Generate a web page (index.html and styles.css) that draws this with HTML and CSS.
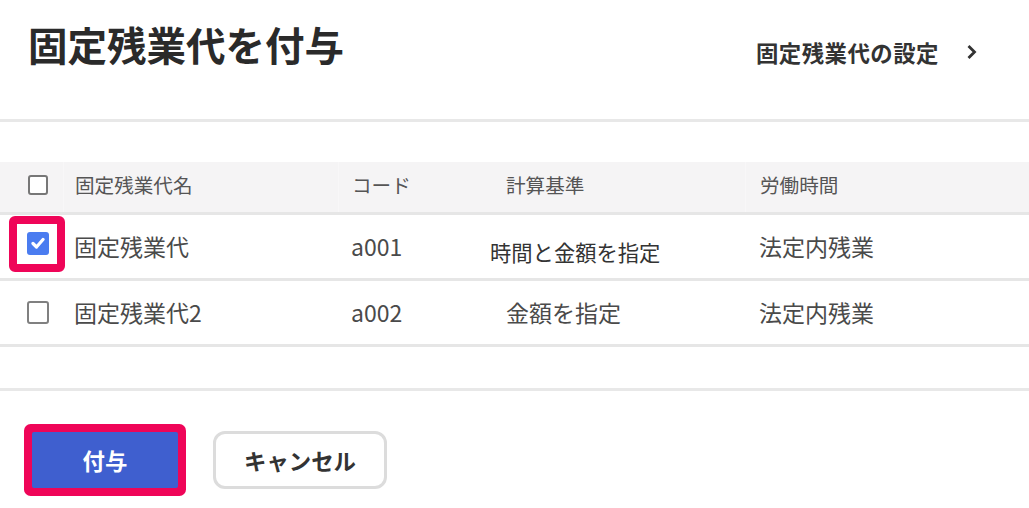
FILE: index.html
```html
<!DOCTYPE html>
<html lang="ja">
<head>
    <meta charset="utf-8">
    <title>固定残業代を付与</title>
    <link rel="stylesheet" href="styles.css">
</head>
<body>
    <header class="page-head">
        <h1 class="page-title">固定残業代を付与</h1>
        <a class="settings-link" href="#">
            <span>固定残業代の設定</span>
            <svg class="chevron" width="12" height="16" viewBox="0 0 12 16">
                <polyline points="2.5,2 8.5,8 2.5,14" />
            </svg>
        </a>
    </header>

    <!-- list of fixed overtime items -->
    <div class="list">
        <div class="grid-row head-row">
            <div class="cell cell-check"><span class="check"></span></div>
            <div class="cell cell-name divided">固定残業代名</div>
            <div class="cell cell-code divided">コード</div>
            <div class="cell cell-calc">計算基準</div>
            <div class="cell cell-work divided">労働時間</div>
        </div>
        <div class="grid-row body-row">
            <div class="cell cell-check">
                <span class="mark">
                    <span class="check big checked">
                        <svg width="14" height="12" viewBox="0 0 14 12">
                            <polyline points="2,6.5 5.5,10 12,2.5" />
                        </svg>
                    </span>
                </span>
            </div>
            <div class="cell cell-name">固定残業代</div>
            <div class="cell cell-code">a001</div>
            <div class="cell cell-calc wide">時間と金額を指定</div>
            <div class="cell cell-work">法定内残業</div>
        </div>
        <div class="grid-row body-row">
            <div class="cell cell-check"><span class="check big"></span></div>
            <div class="cell cell-name">固定残業代2</div>
            <div class="cell cell-code">a002</div>
            <div class="cell cell-calc">金額を指定</div>
            <div class="cell cell-work">法定内残業</div>
        </div>
    </div>

    <footer class="actions">
        <button class="btn btn-primary" type="button">付与</button>
        <button class="btn btn-secondary" type="button">キャンセル</button>
    </footer>
</body>
</html>
```

FILE: styles.css
```css
body {
    margin: 0;
    background: #fff;
    color: #333;
    font-family: "Noto Sans CJK JP", "Noto Sans", sans-serif;
}

/* page header */
.page-head {
    display: flex;
    justify-content: space-between;
    align-items: flex-start;
    height: 119px;
    padding: 0 51px 0 28px;
    border-bottom: 3px solid #e8e8e8;
}
.page-title {
    margin: 24px 0 0;
    font-size: 39.5px;
    line-height: 1;
    font-weight: 700;
    color: #2a2a2a;
}
.settings-link {
    display: flex;
    align-items: center;
    gap: 27px;
    margin-top: 41px;
    font-size: 22.4px;
    line-height: 1;
    font-weight: 700;
    letter-spacing: 0.5px;
    color: #333;
    text-decoration: none;
}
.chevron polyline {
    fill: none;
    stroke: #333;
    stroke-width: 2.8;
}

/* list */
.list {
    margin-top: 40px;
}
.grid-row {
    display: grid;
    grid-template-columns: 63px 275px 152px 255px 1fr;
    border-bottom: 3px solid #e6e6e6;
}
.head-row {
    height: 50px;
    background: #f5f4f5;
    font-size: 19.6px;
    color: #555;
}
.body-row {
    height: 63px;
    font-size: 23px;
    color: #4a4a4a;
}
.cell {
    display: flex;
    align-items: center;
    line-height: 1;
    white-space: nowrap;
}
.head-row .cell {
    padding-bottom: 5px;
}
.divided {
    border-left: 1px solid #f8f7f8;
}
.cell-check {
    padding-left: 28px;
}
.body-row .cell-check {
    padding-left: 27px;
}
.cell-name {
    padding-left: 11px;
}
.cell-code {
    padding-left: 13px;
}
.cell-calc {
    padding-left: 16px;
}
.cell-calc.wide {
    padding: 10px 0 0;
    font-size: 21.3px;
    color: #333;
}
.cell-work {
    padding-left: 14px;
}

/* checkboxes */
.check {
    display: inline-flex;
    align-items: center;
    justify-content: center;
    box-sizing: border-box;
    width: 20px;
    height: 20px;
    border: 2px solid #777;
    border-radius: 3px;
    background: #fff;
}
.check.big {
    width: 22px;
    height: 23px;
    border-color: #808080;
}
.check.checked {
    border: none;
    background: #4a7cf0;
}
.check.checked polyline {
    fill: none;
    stroke: #fff;
    stroke-width: 3.2;
    stroke-linecap: round;
    stroke-linejoin: round;
}
/* highlight annotation */
.mark {
    display: inline-flex;
    margin: 0 0 6px -18px;
    padding: 8px 8px 9px 10px;
    border: 8px solid #ef0558;
    border-radius: 6px;
    background: #fff;
}

/* buttons */
.actions {
    display: flex;
    align-items: center;
    gap: 35px;
    margin-top: 41px;
    padding: 40px 32px;
    border-top: 3px solid #e8e8e8;
}
.btn {
    box-sizing: border-box;
    font-family: inherit;
    font-size: 22.4px;
    font-weight: 700;
    line-height: 1;
    cursor: pointer;
}
.btn-primary {
    width: 146px;
    height: 56px;
    border: none;
    border-radius: 2px;
    background: #3f5fcf;
    color: #fff;
    box-shadow: 0 0 0 8px #ef0558;
}
.btn-secondary {
    width: 174px;
    height: 58px;
    border: 3px solid #dcdcdc;
    border-radius: 12px;
    background: #fff;
    color: #333;
}
```
